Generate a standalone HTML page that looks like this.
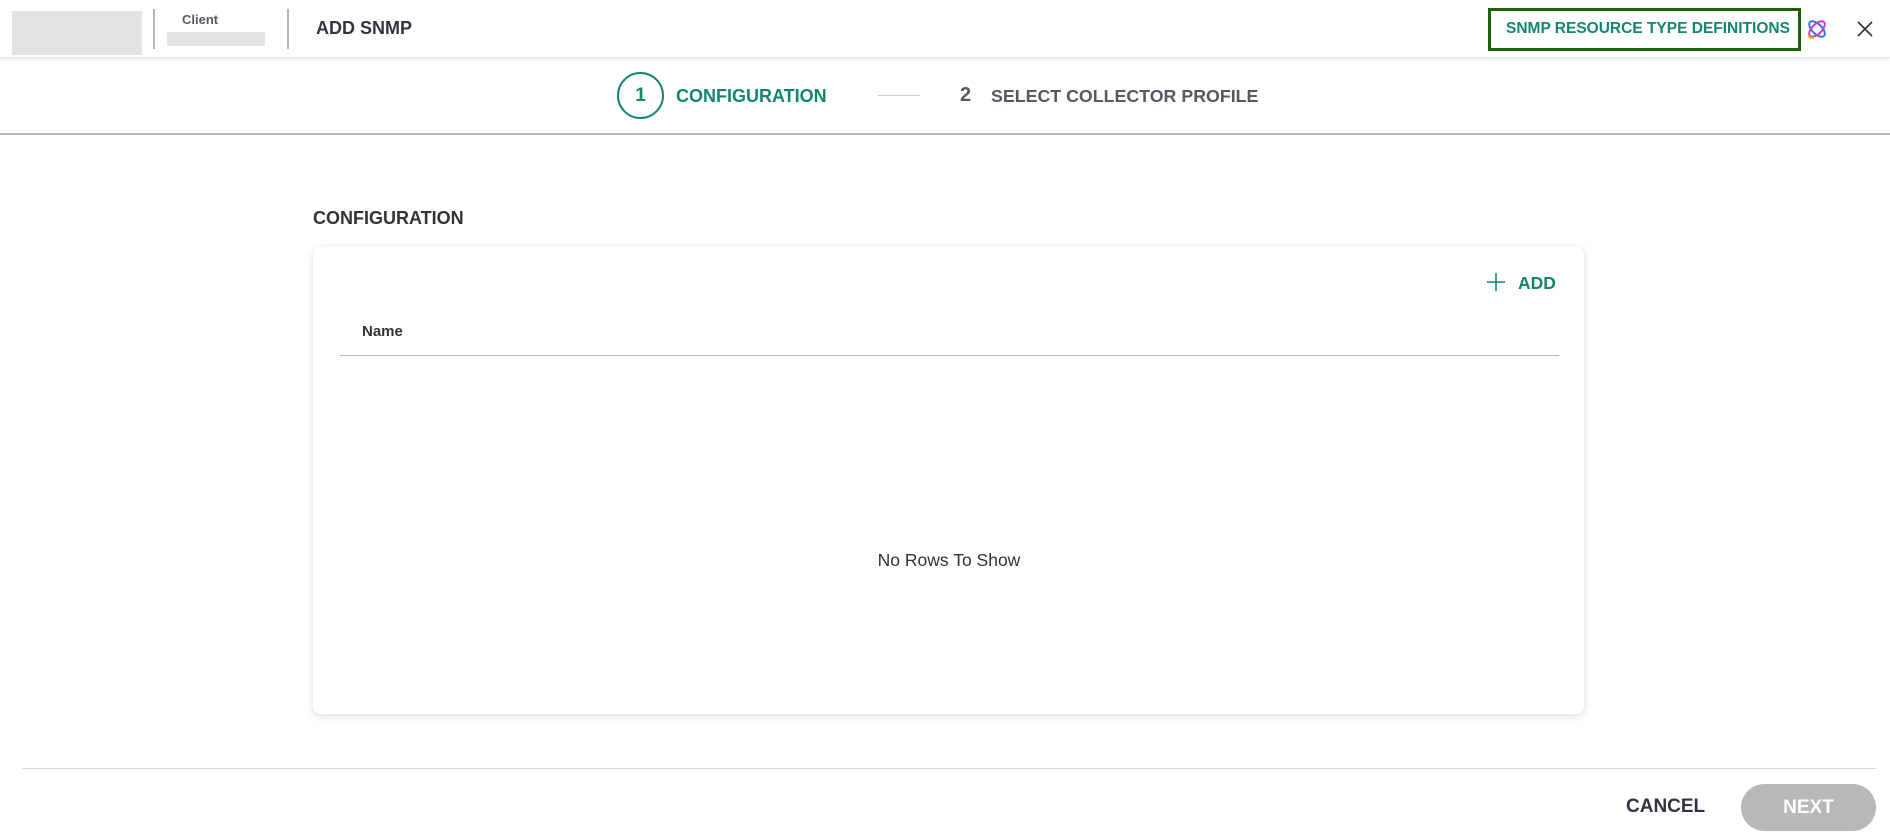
<!DOCTYPE html>
<html><head><meta charset="utf-8"><style>
*{margin:0;padding:0;box-sizing:border-box}
body{width:1890px;height:836px;background:#fff;font-family:"Liberation Sans",Arial,sans-serif;position:relative;overflow:hidden}
.a{position:absolute}
.hdr{left:0;top:0;width:1890px;height:58px;background:#fff;box-shadow:0 2px 3px rgba(0,0,0,.08);border-bottom:1px solid #e4e4e4}
.g{background:#e4e3e1}
.dv{width:2px;background:#b4b8bc}
.b{font-weight:bold}
</style></head><body>
<div class="a hdr"></div>
<div class="a g" style="left:12px;top:11px;width:130px;height:44px"></div>
<div class="a dv" style="left:153px;top:9px;height:40px"></div>
<div class="a b" style="left:182px;top:12px;font-size:13px;color:#555c66">Client</div>
<div class="a g" style="left:167px;top:32px;width:98px;height:14px"></div>
<div class="a dv" style="left:287px;top:9px;height:40px"></div>
<div class="a b" style="left:316px;top:18px;font-size:18px;color:#2f3542">ADD SNMP</div>
<div class="a" style="left:1488px;top:8px;width:313px;height:43px;border:3px solid #1f5e0b"></div>
<div class="a b" style="left:1506px;top:20px;font-size:15.5px;color:#12866f">SNMP RESOURCE TYPE DEFINITIONS</div>
<svg class="a" style="left:1805px;top:17px" width="24" height="24" viewBox="0 0 22 22" fill="none" stroke-width="1.8">
<ellipse cx="11" cy="11" rx="9" ry="4.5" transform="rotate(45 11 11)" stroke="#3b6fe0"/>
<ellipse cx="11" cy="11" rx="9" ry="4.5" transform="rotate(-45 11 11)" stroke="#c83cc0"/>
<path d="M3 17 Q5 20 8 19" stroke="#f0b800"/>
</svg>
<svg class="a" style="left:1856px;top:20px" width="18" height="18" viewBox="0 0 18 18" stroke="#333" stroke-width="1.6"><path d="M2 2L16 16M16 2L2 16"/></svg>
<div class="a" style="left:617px;top:72px;width:47px;height:47px;border:2px solid #13866a;border-radius:50%;text-align:center;line-height:43px;font-size:19px;font-weight:bold;color:#13866a">1</div>
<div class="a b" style="left:676px;top:86px;font-size:18px;color:#13866a">CONFIGURATION</div>
<div class="a" style="left:878px;top:95px;width:42px;height:1px;background:#ccc"></div>
<div class="a b" style="left:960px;top:84px;font-size:20px;color:#555a62">2</div>
<div class="a b" style="left:991px;top:86px;font-size:17.8px;color:#555a62">SELECT COLLECTOR PROFILE</div>
<div class="a" style="left:0;top:133px;width:1890px;height:2px;background:#b4b8bc"></div>
<div class="a b" style="left:313px;top:208px;font-size:18px;color:#333">CONFIGURATION</div>
<div class="a" style="left:313px;top:247px;width:1271px;height:467px;border-radius:8px;background:#fff;box-shadow:0 2px 8px rgba(0,0,0,.15)"></div>
<svg class="a" style="left:1486px;top:272px" width="20" height="20" viewBox="0 0 20 20" stroke="#13866a" stroke-width="1.6"><path d="M10 1V19M1 10H19"/></svg>
<div class="a b" style="left:1518px;top:273px;font-size:17.5px;color:#13866a">ADD</div>
<div class="a b" style="left:362px;top:323px;font-size:15px;color:#333">Name</div>
<div class="a" style="left:340px;top:355px;width:1219px;height:1px;background:#b8b8b8"></div>
<div class="a" style="left:749px;top:550px;width:400px;text-align:center;font-size:17.5px;color:#333">No Rows To Show</div>
<div class="a" style="left:22px;top:768px;width:1854px;height:1px;background:#d6d6dc"></div>
<div class="a b" style="left:1626px;top:796px;font-size:19px;color:#2f3542">CANCEL</div>
<div class="a b" style="left:1741px;top:784px;width:135px;height:47px;border-radius:24px;background:#b8b8b8;color:#fff;font-size:19px;text-align:center;line-height:47px">NEXT</div>
</body></html>
